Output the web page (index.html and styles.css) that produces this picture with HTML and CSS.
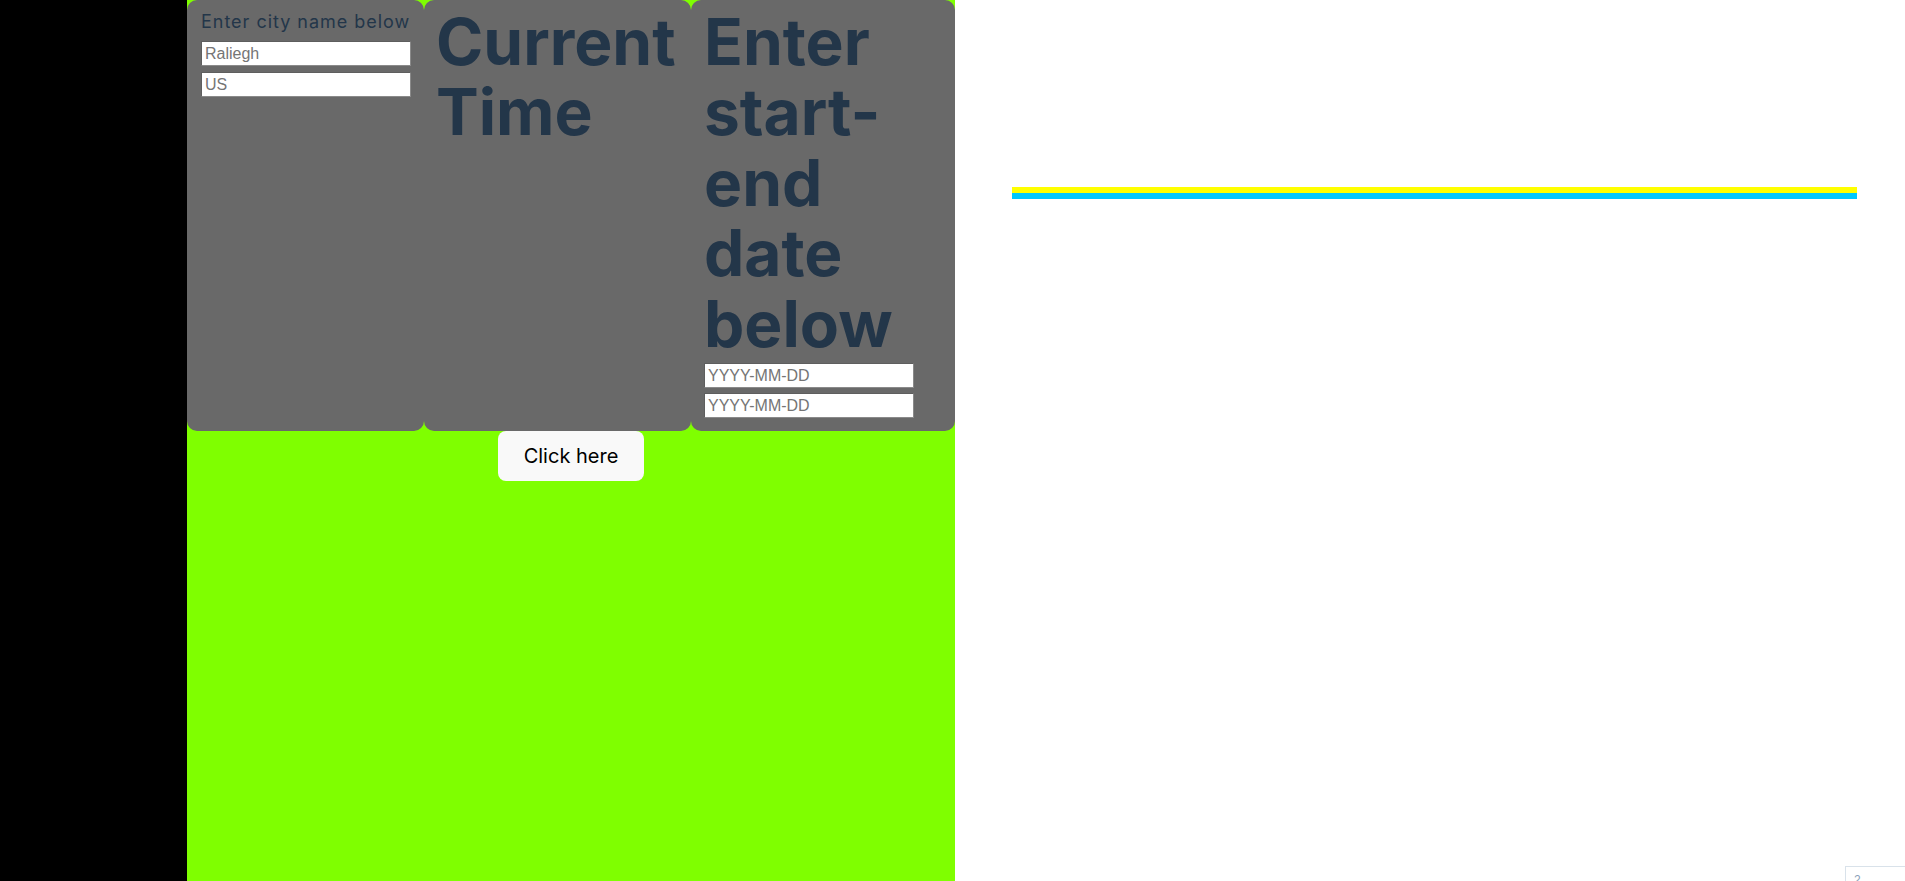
FILE: index.html
```html
<!DOCTYPE html>
<html lang="en">
<head>
<meta charset="utf-8">
<title>Weather</title>
<link rel="stylesheet" href="styles.css">
</head>
<body>
<div class="page">
  <aside class="sidebar"></aside>
  <main class="main">
    <div class="panels">
      <section class="panel panel-city">
        <p class="label">Enter city name below</p>
        <input class="field" type="text" placeholder="Raliegh">
        <input class="field" type="text" placeholder="US">
      </section>
      <section class="panel panel-time">
        <h1 class="heading">Current Time</h1>
      </section>
      <section class="panel panel-dates">
        <h1 class="heading">Enter start-end date below</h1>
        <input class="field field-date" type="text" placeholder="YYYY-MM-DD">
        <input class="field" type="text" placeholder="YYYY-MM-DD">
      </section>
    </div>
    <div class="actions">
      <button class="btn" type="button">Click here</button>
    </div>
  </main>
  <section class="chart">
    <div class="series series-yellow"></div>
    <div class="series series-blue"></div>
  </section>
</div>
<div class="corner-widget"><span class="cw-a">2</span></div>
</body>
</html>
```

FILE: styles.css
```css
html, body {
  margin: 0;
  padding: 0;
  height: 100%;
  overflow: hidden;
  background: #ffffff;
}

.page {
  display: flex;
  height: 881px;
}

.sidebar {
  width: 187px;
  flex: none;
  background: #000000;
}

.main {
  width: 768px;
  flex: none;
  background: #7fff00;
  display: flex;
  flex-direction: column;
}

.panels {
  display: flex;
  align-items: stretch;
}

.panel {
  background: #696969;
  border-radius: 10px;
  padding: 7px 13px 13px 13px;
  box-sizing: border-box;
  display: flex;
  flex-direction: column;
  align-items: flex-start;
}

.panel-city {
  width: 237px;
  padding-left: 14px;
}

.panel-time {
  width: 267px;
  padding-left: 12px;
}

.panel-dates {
  width: 264px;
}

.label {
  margin: 4px 0 8px 0;
  font-family: Inter, "Noto Sans", sans-serif;
  font-size: 18px;
  line-height: 22px;
  font-weight: 400;
  letter-spacing: 0.98px;
  white-space: nowrap;
  color: #233649;
}

.heading {
  margin: 0;
  font-family: Inter, "Noto Sans", sans-serif;
  font-size: 64px;
  line-height: 70.4px;
  font-weight: 700;
  color: #233649;
}

.field {
  display: block;
  width: 210px;
  height: 25px;
  box-sizing: border-box;
  margin: 0 0 6px 0;
  padding: 1px 2px 1px 3px;
  border-width: 1px;
  border-style: solid;
  border-color: #5e5e5e #8a8a8a #8a8a8a #5e5e5e;
  background: #ffffff;
  font-family: "Liberation Sans", Arial, sans-serif;
  font-size: 16px;
  color: #222;
  outline: none;
}

.field::placeholder {
  color: #757575;
}

.panel-city .field:last-child,
.panel-dates .field:last-child {
  margin-bottom: 0;
}

.field-date {
  margin-top: 4px;
  margin-bottom: 5px;
}

.actions {
  display: flex;
  justify-content: center;
}

.btn {
  font-family: Inter, "Noto Sans", sans-serif;
  font-size: 20px;
  line-height: 24px;
  font-weight: 400;
  color: #000000;
  background: #f9f9f9;
  border: none;
  border-radius: 8px;
  padding: 13px 26px;
  cursor: pointer;
}

.chart {
  flex: 1;
  padding: 187px 48px 0 57px;
  box-sizing: border-box;
}

.series {
  height: 6px;
}

.series-yellow {
  background: #ffff00;
}

.series-blue {
  background: #00c8ff;
}

.corner-widget {
  position: fixed;
  left: 1845px;
  top: 866px;
  width: 80px;
  height: 40px;
  border: 1px solid #d9e2ea;
  background: #ffffff;
  box-sizing: border-box;
  padding: 6px 0 0 8px;
  font-family: "Liberation Sans", Arial, sans-serif;
  font-size: 12px;
  color: #8aa0b8;
}
```
